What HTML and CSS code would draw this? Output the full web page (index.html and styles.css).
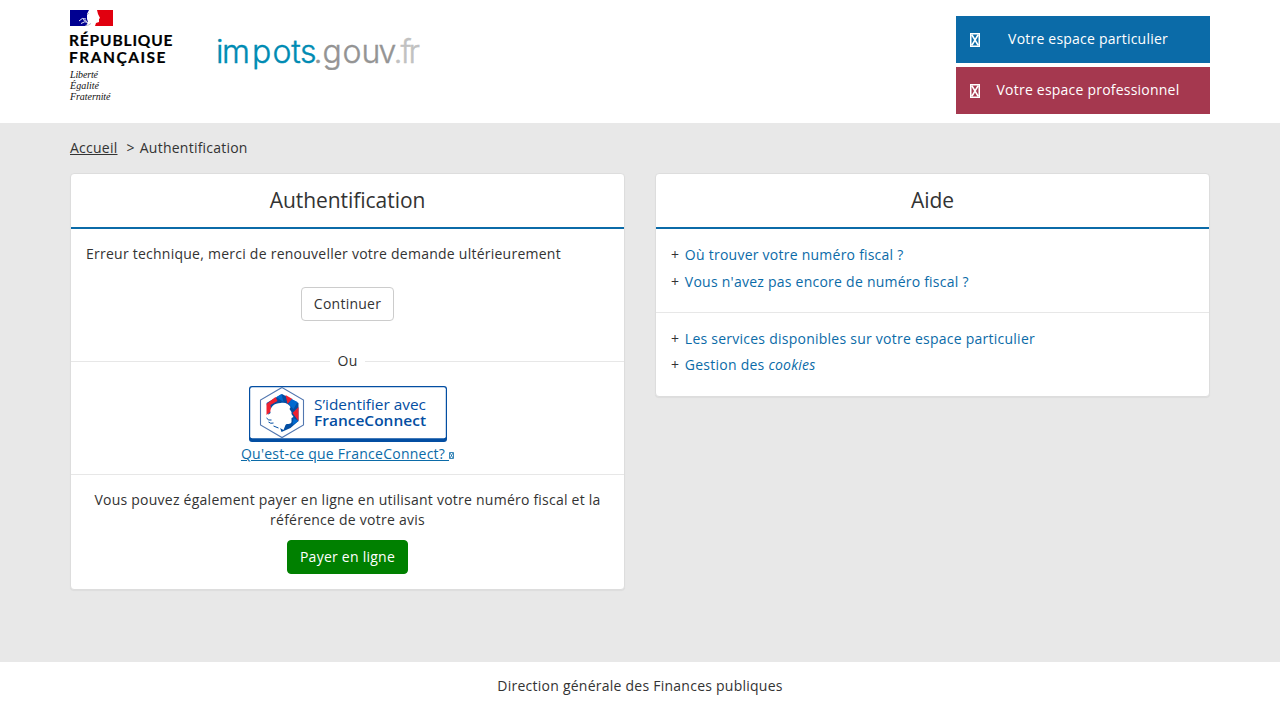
FILE: index.html
```html
<!DOCTYPE html>
<html lang="fr">
<head>
<meta charset="utf-8">
<title>Authentification</title>
<link rel="stylesheet" href="styles.css">
</head>
<body>
<header class="header">
  <div class="container header-row">
    <div class="logos">
      <svg class="logo-rf" width="106" height="94" viewBox="0 0 106 94" role="img" aria-label="République Française">
        <path fill="#000091" d="M0 0h19l-2 4v5l1 3-2 4H0z"/>
        <path fill="#e1000f" d="M27 0h16v16H25l1-3 3-1v-3l1-1-2-4z"/>
        <path fill="none" stroke="#fff" stroke-width=".9" d="M9 11q3-4 7-2M11 13.500q4-3 7-1M13 9.500l4 2"/>
        <path fill="none" stroke="#9a9ab5" stroke-width=".7" d="M17 5l2-2M15 15.500q4 0 6-2"/>
        <g class="rf-name">
          <text x="-1" y="35.6" textLength="103.500">RÉPUBLIQUE</text>
          <text x="-1" y="53" textLength="96.500">FRANÇAISE</text>
        </g>
        <g class="rf-motto">
          <text x="0" y="68" textLength="28">Liberté</text>
          <text x="0" y="79" textLength="29">Égalité</text>
          <text x="0" y="90" textLength="40.500">Fraternité</text>
        </g>
      </svg>
      <svg class="logo-impots" width="204" height="40" viewBox="0 0 204 40" role="img" aria-label="impots.gouv.fr">
        <text y="29.300"><tspan class="im-blue" x="-2 4 34 54.500 73.200 82">impots</tspan><tspan class="im-gray" x="95.500 104.500 124.500 143.500 160.500">.gouv</tspan><tspan class="im-light" x="175.500 182.500 190.500">.fr</tspan></text>
      </svg>
    </div>
    <nav class="spaces">
      <a class="space space-part" href="#"><svg class="space-icon" width="10" height="14" viewBox="0 0 10 14"><path d="M.75.75h8.500v12.500H.75zM2 2l6 10M8 2L2 12"/></svg><span class="space-label">Votre espace particulier</span></a>
      <a class="space space-pro" href="#"><svg class="space-icon" width="10" height="14" viewBox="0 0 10 14"><path d="M.75.75h8.500v12.500H.75zM2 2l6 10M8 2L2 12"/></svg><span class="space-label">Votre espace professionnel</span></a>
    </nav>
  </div>
</header>
<main class="container main">
  <div class="breadcrumb"><a href="#">Accueil</a><span class="sep">&gt;</span><span>Authentification</span></div>
  <div class="columns">
    <section class="panel">
      <h1 class="panel-title">Authentification</h1>
      <div class="error">
        <p>Erreur technique, merci de renouveller votre demande ultérieurement</p>
        <button class="btn">Continuer</button>
      </div>
      <div class="or"><span>Ou</span></div>
      <div class="fc">
        <svg class="fc-button" width="198" height="56" viewBox="0 0 198 56" role="img" aria-label="S’identifier avec FranceConnect">
          <rect width="198" height="56" rx="3" fill="#034ea2"/>
          <rect x="1.200" y="1.200" width="195.600" height="51" rx="2" fill="#fff"/>
          <path fill="#fff" stroke="#5277b0" stroke-width="1.100" d="M33 1.500l21.500 12.500v25L33 51.500 11.500 39V14z"/>
          <path fill="#034ea2" d="M33 8l16.500 9v18l-8 7-9 4-3-9-10-8-2-12z"/>
          <path fill="#ee2130" d="M17.500 18l9-7 2 4-7 4 1 6-5 4zM36.500 9l7 4-5 5z"/>
          <path fill="#006ad0" d="M27.500 11l5-3 2 8zM42.500 13l6 3-4 7-5-5zM44.500 32l5 3-6 4z"/>
          <path fill="#ee2130" d="M49.500 21v14l-6-8z"/>
          <path fill="#fff" d="M21.500 27c-1-6 4-10 10-10 5-1 8 1 10 4l-1 2 2 3 0 2 2 3-2 1v4c-1 3-5 1-6 3l-2 5-9-5-2-5-6-4z"/>
          <path fill="none" stroke="#034ea2" stroke-width="1" d="M17.500 32q2 3 5 2M19.500 36q2 2 5 1M24.500 40l5 2"/>
          <text class="fc-small" x="65" y="23.500" textLength="112" lengthAdjust="spacingAndGlyphs">S’identifier avec</text>
          <text class="fc-big" x="65" y="40" textLength="112" lengthAdjust="spacingAndGlyphs">FranceConnect</text>
        </svg>
        <a href="#">Qu'est-ce que FranceConnect? <svg class="ext" width="5" height="7" viewBox="0 0 5 7"><path d="M.5.5h4v6h-4zM1 1l3 5M4 1L1 6"/></svg></a>
      </div>
      <div class="pay">
        <p>Vous pouvez également payer en ligne en utilisant votre numéro fiscal et la référence de votre avis</p>
        <button class="btn btn-green">Payer en ligne</button>
      </div>
    </section>
    <section class="panel">
      <h2 class="panel-title">Aide</h2>
      <ul class="links">
        <li><a href="#">Où trouver votre numéro fiscal ?</a></li>
        <li><a href="#">Vous n'avez pas encore de numéro fiscal ?</a></li>
      </ul>
      <ul class="links links-second">
        <li><a href="#">Les services disponibles sur votre espace particulier</a></li>
        <li><a href="#">Gestion des <em>cookies</em></a></li>
      </ul>
    </section>
  </div>
</main>
<footer class="footer">Direction générale des Finances publiques</footer>
</body>
</html>
```
FILE: styles.css
```css
* { box-sizing: border-box; }
body {
  margin: 0;
  min-height: 720px;
  display: flex;
  flex-direction: column;
  background: #e8e8e8;
  color: #333;
  font: 14px/20px "Open Sans", sans-serif;
  letter-spacing: .245px;
  font-feature-settings: "liga" 1;
}
svg { letter-spacing: 0; }
a { color: #0b6ba8; text-decoration: none; }
p { margin: 0; }
.container { width: 1140px; margin: 0 auto; }
.header { height: 123px; background: #fff; }
.header-row { display: flex; justify-content: space-between; }
.logos { display: flex; padding-top: 10px; }
.logo-impots { margin: 24px 0 0 42px; overflow: visible; }
.logo-rf { overflow: visible; }
.rf-name { font: 700 15.5px Lato, sans-serif; fill: #000; stroke: #000; stroke-width: .2px; }
.rf-motto { font: italic 10px "Liberation Serif", serif; fill: #111; }
.logo-impots text { font: 300 32px/1 Inter, sans-serif; stroke-width: .4px; }
.im-blue { fill: #008bb3; stroke: #008bb3; }
.im-gray { fill: #949494; stroke: #949494; }
.im-light { fill: #c1c1c1; stroke: #c1c1c1; }
.spaces { display: flex; flex-direction: column; gap: 4px; width: 254px; padding-top: 16px; }
.space { display: flex; align-items: center; height: 47px; padding: 0 14px; color: #fff; }
.space-part { background: #0b6ba8; }
.space-pro { background: #a5384f; }
.space-icon { margin-top: 1px; fill: none; stroke: #fff; stroke-width: 1.5; }
.space-label { flex: 1; text-align: center; padding-bottom: 2px; letter-spacing: .22px; }
.main { flex: 1; padding-top: 15px; }
.breadcrumb a { color: #333; text-decoration: underline; }
.sep { margin: 0 5px 0 9px; }
.columns { display: grid; grid-template-columns: 555px 555px; gap: 30px; align-items: start; margin-top: 15px; }
.panel { background: #fff; border: 1px solid #ddd; border-radius: 4px; box-shadow: 0 1px 1px rgba(0, 0, 0, .05); }
.panel-title { margin: 0; height: 55px; border-bottom: 2px solid #0b6ba8; font-size: 21px; font-weight: 400; line-height: 53px; letter-spacing: -.05px; text-align: center; }
.error { padding: 15px 15px 0; text-align: center; }
.error p { text-align: left; }
.btn { height: 34px; padding: 0 12px; border: 1px solid #ccc; border-radius: 4px; background: #fff; color: #333; font: inherit; letter-spacing: inherit; }
.error .btn { margin-top: 23px; }
.btn-green { background: green; border-color: green; color: #fff; }
.or { display: flex; align-items: center; gap: 8px; margin-top: 30px; }
.or::before, .or::after { content: ""; flex: 1; height: 1px; background: #e7e7e7; }
.fc { display: flex; flex-direction: column; align-items: center; height: 104px; padding-top: 15px; border-bottom: 1px solid #e7e7e7; }
.fc-button { margin-left: 1px; }
.fc a { margin-top: 2px; text-decoration: underline; }
.fc-small { font: 400 14px "Open Sans", sans-serif; fill: #034ea2; }
.fc-big { font: 600 14px "Open Sans", sans-serif; fill: #034ea2; }
.ext { fill: none; stroke: #0b6ba8; stroke-width: .8; }
.pay { padding: 15px; text-align: center; }
.pay .btn { margin-top: 10px; }
.links { margin: 0; padding: 16px 15px; height: 83px; list-style: none; }
.links li { height: 27px; }
.links li::before { content: "+"; margin-right: 5.6px; }
.links-second { height: 84px; border-top: 1px solid #e7e7e7; }
.links-second li { height: 26px; }
.footer { height: 58px; padding-top: 14px; background: #fff; text-align: center; }
```
